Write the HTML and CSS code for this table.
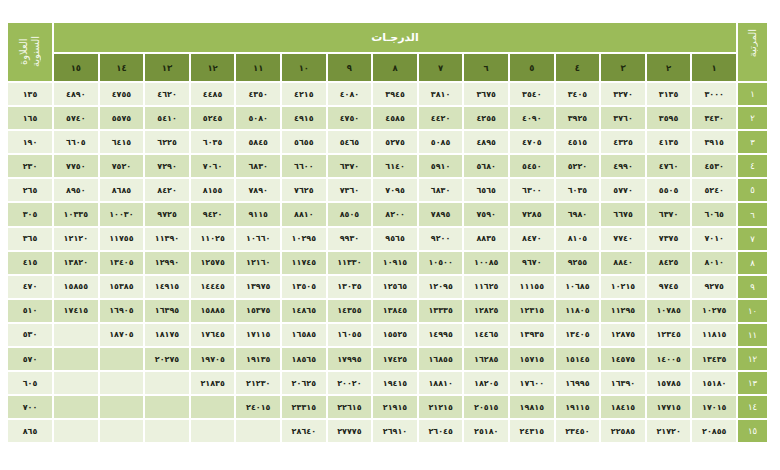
FILE: index.html
```html
<!DOCTYPE html>
<html lang="ar" dir="rtl">
<head>
<meta charset="utf-8">
<title>جدول الرواتب</title>
<link rel="stylesheet" href="styles.css">
</head>
<body>
<div class="sheet">
  <div class="salary">
    <div class="rank-head"><span class="vtext">المرتبة</span></div>
    <div class="grades-head">الدرجـات</div>
    <div class="allow-head"><span class="vtext">العلاوة<br>السنوية</span></div>

    <div class="gnum">١</div><div class="gnum">٢</div><div class="gnum">٣</div><div class="gnum">٤</div><div class="gnum">٥</div><div class="gnum">٦</div><div class="gnum">٧</div><div class="gnum">٨</div><div class="gnum">٩</div><div class="gnum">١٠</div><div class="gnum">١١</div><div class="gnum">١٢</div><div class="gnum">١٣</div><div class="gnum">١٤</div><div class="gnum">١٥</div>

    <div class="row light"><div class="rank">١</div><div class="cell">٣٠٠٠</div><div class="cell">٣١٣٥</div><div class="cell">٣٢٧٠</div><div class="cell">٣٤٠٥</div><div class="cell">٣٥٤٠</div><div class="cell">٣٦٧٥</div><div class="cell">٣٨١٠</div><div class="cell">٣٩٤٥</div><div class="cell">٤٠٨٠</div><div class="cell">٤٢١٥</div><div class="cell">٤٣٥٠</div><div class="cell">٤٤٨٥</div><div class="cell">٤٦٢٠</div><div class="cell">٤٧٥٥</div><div class="cell">٤٨٩٠</div><div class="cell">١٣٥</div></div>
    <div class="row dark"><div class="rank">٢</div><div class="cell">٣٤٣٠</div><div class="cell">٣٥٩٥</div><div class="cell">٣٧٦٠</div><div class="cell">٣٩٢٥</div><div class="cell">٤٠٩٠</div><div class="cell">٤٢٥٥</div><div class="cell">٤٤٢٠</div><div class="cell">٤٥٨٥</div><div class="cell">٤٧٥٠</div><div class="cell">٤٩١٥</div><div class="cell">٥٠٨٠</div><div class="cell">٥٢٤٥</div><div class="cell">٥٤١٠</div><div class="cell">٥٥٧٥</div><div class="cell">٥٧٤٠</div><div class="cell">١٦٥</div></div>
    <div class="row light"><div class="rank">٣</div><div class="cell">٣٩١٥</div><div class="cell">٤١٣٥</div><div class="cell">٤٣٢٥</div><div class="cell">٤٥١٥</div><div class="cell">٤٧٠٥</div><div class="cell">٤٨٩٥</div><div class="cell">٥٠٨٥</div><div class="cell">٥٢٧٥</div><div class="cell">٥٤٦٥</div><div class="cell">٥٦٥٥</div><div class="cell">٥٨٤٥</div><div class="cell">٦٠٣٥</div><div class="cell">٦٢٢٥</div><div class="cell">٦٤١٥</div><div class="cell">٦٦٠٥</div><div class="cell">١٩٠</div></div>
    <div class="row dark"><div class="rank">٤</div><div class="cell">٤٥٣٠</div><div class="cell">٤٧٦٠</div><div class="cell">٤٩٩٠</div><div class="cell">٥٢٢٠</div><div class="cell">٥٤٥٠</div><div class="cell">٥٦٨٠</div><div class="cell">٥٩١٠</div><div class="cell">٦١٤٠</div><div class="cell">٦٣٧٠</div><div class="cell">٦٦٠٠</div><div class="cell">٦٨٣٠</div><div class="cell">٧٠٦٠</div><div class="cell">٧٢٩٠</div><div class="cell">٧٥٢٠</div><div class="cell">٧٧٥٠</div><div class="cell">٢٣٠</div></div>
    <div class="row light"><div class="rank">٥</div><div class="cell">٥٢٤٠</div><div class="cell">٥٥٠٥</div><div class="cell">٥٧٧٠</div><div class="cell">٦٠٣٥</div><div class="cell">٦٣٠٠</div><div class="cell">٦٥٦٥</div><div class="cell">٦٨٣٠</div><div class="cell">٧٠٩٥</div><div class="cell">٧٣٦٠</div><div class="cell">٧٦٢٥</div><div class="cell">٧٨٩٠</div><div class="cell">٨١٥٥</div><div class="cell">٨٤٢٠</div><div class="cell">٨٦٨٥</div><div class="cell">٨٩٥٠</div><div class="cell">٢٦٥</div></div>
    <div class="row dark"><div class="rank">٦</div><div class="cell">٦٠٦٥</div><div class="cell">٦٣٧٠</div><div class="cell">٦٦٧٥</div><div class="cell">٦٩٨٠</div><div class="cell">٧٢٨٥</div><div class="cell">٧٥٩٠</div><div class="cell">٧٨٩٥</div><div class="cell">٨٢٠٠</div><div class="cell">٨٥٠٥</div><div class="cell">٨٨١٠</div><div class="cell">٩١١٥</div><div class="cell">٩٤٢٠</div><div class="cell">٩٧٢٥</div><div class="cell">١٠٠٣٠</div><div class="cell">١٠٣٣٥</div><div class="cell">٣٠٥</div></div>
    <div class="row light"><div class="rank">٧</div><div class="cell">٧٠١٠</div><div class="cell">٧٣٧٥</div><div class="cell">٧٧٤٠</div><div class="cell">٨١٠٥</div><div class="cell">٨٤٧٠</div><div class="cell">٨٨٣٥</div><div class="cell">٩٢٠٠</div><div class="cell">٩٥٦٥</div><div class="cell">٩٩٣٠</div><div class="cell">١٠٢٩٥</div><div class="cell">١٠٦٦٠</div><div class="cell">١١٠٢٥</div><div class="cell">١١٣٩٠</div><div class="cell">١١٧٥٥</div><div class="cell">١٢١٢٠</div><div class="cell">٣٦٥</div></div>
    <div class="row dark"><div class="rank">٨</div><div class="cell">٨٠١٠</div><div class="cell">٨٤٢٥</div><div class="cell">٨٨٤٠</div><div class="cell">٩٢٥٥</div><div class="cell">٩٦٧٠</div><div class="cell">١٠٠٨٥</div><div class="cell">١٠٥٠٠</div><div class="cell">١٠٩١٥</div><div class="cell">١١٣٣٠</div><div class="cell">١١٧٤٥</div><div class="cell">١٢١٦٠</div><div class="cell">١٢٥٧٥</div><div class="cell">١٢٩٩٠</div><div class="cell">١٣٤٠٥</div><div class="cell">١٣٨٢٠</div><div class="cell">٤١٥</div></div>
    <div class="row light"><div class="rank">٩</div><div class="cell">٩٢٧٥</div><div class="cell">٩٧٤٥</div><div class="cell">١٠٢١٥</div><div class="cell">١٠٦٨٥</div><div class="cell">١١١٥٥</div><div class="cell">١١٦٢٥</div><div class="cell">١٢٠٩٥</div><div class="cell">١٢٥٦٥</div><div class="cell">١٣٠٣٥</div><div class="cell">١٣٥٠٥</div><div class="cell">١٣٩٧٥</div><div class="cell">١٤٤٤٥</div><div class="cell">١٤٩١٥</div><div class="cell">١٥٣٨٥</div><div class="cell">١٥٨٥٥</div><div class="cell">٤٧٠</div></div>
    <div class="row dark"><div class="rank">١٠</div><div class="cell">١٠٢٧٥</div><div class="cell">١٠٧٨٥</div><div class="cell">١١٢٩٥</div><div class="cell">١١٨٠٥</div><div class="cell">١٢٣١٥</div><div class="cell">١٢٨٢٥</div><div class="cell">١٣٣٣٥</div><div class="cell">١٣٨٤٥</div><div class="cell">١٤٣٥٥</div><div class="cell">١٤٨٦٥</div><div class="cell">١٥٣٧٥</div><div class="cell">١٥٨٨٥</div><div class="cell">١٦٣٩٥</div><div class="cell">١٦٩٠٥</div><div class="cell">١٧٤١٥</div><div class="cell">٥١٠</div></div>
    <div class="row light"><div class="rank">١١</div><div class="cell">١١٨١٥</div><div class="cell">١٢٣٤٥</div><div class="cell">١٢٨٧٥</div><div class="cell">١٣٤٠٥</div><div class="cell">١٣٩٣٥</div><div class="cell">١٤٤٦٥</div><div class="cell">١٤٩٩٥</div><div class="cell">١٥٥٢٥</div><div class="cell">١٦٠٥٥</div><div class="cell">١٦٥٨٥</div><div class="cell">١٧١١٥</div><div class="cell">١٧٦٤٥</div><div class="cell">١٨١٧٥</div><div class="cell">١٨٧٠٥</div><div class="cell"></div><div class="cell">٥٣٠</div></div>
    <div class="row dark"><div class="rank">١٢</div><div class="cell">١٣٤٣٥</div><div class="cell">١٤٠٠٥</div><div class="cell">١٤٥٧٥</div><div class="cell">١٥١٤٥</div><div class="cell">١٥٧١٥</div><div class="cell">١٦٢٨٥</div><div class="cell">١٦٨٥٥</div><div class="cell">١٧٤٢٥</div><div class="cell">١٧٩٩٥</div><div class="cell">١٨٥٦٥</div><div class="cell">١٩١٣٥</div><div class="cell">١٩٧٠٥</div><div class="cell">٢٠٢٧٥</div><div class="cell"></div><div class="cell"></div><div class="cell">٥٧٠</div></div>
    <div class="row light"><div class="rank">١٣</div><div class="cell">١٥١٨٠</div><div class="cell">١٥٧٨٥</div><div class="cell">١٦٣٩٠</div><div class="cell">١٦٩٩٥</div><div class="cell">١٧٦٠٠</div><div class="cell">١٨٢٠٥</div><div class="cell">١٨٨١٠</div><div class="cell">١٩٤١٥</div><div class="cell">٢٠٠٢٠</div><div class="cell">٢٠٦٢٥</div><div class="cell">٢١٢٣٠</div><div class="cell">٢١٨٣٥</div><div class="cell"></div><div class="cell"></div><div class="cell"></div><div class="cell">٦٠٥</div></div>
    <div class="row dark"><div class="rank">١٤</div><div class="cell">١٧٠١٥</div><div class="cell">١٧٧١٥</div><div class="cell">١٨٤١٥</div><div class="cell">١٩١١٥</div><div class="cell">١٩٨١٥</div><div class="cell">٢٠٥١٥</div><div class="cell">٢١٢١٥</div><div class="cell">٢١٩١٥</div><div class="cell">٢٢٦١٥</div><div class="cell">٢٣٣١٥</div><div class="cell">٢٤٠١٥</div><div class="cell"></div><div class="cell"></div><div class="cell"></div><div class="cell"></div><div class="cell">٧٠٠</div></div>
    <div class="row light"><div class="rank">١٥</div><div class="cell">٢٠٨٥٥</div><div class="cell">٢١٧٢٠</div><div class="cell">٢٢٥٨٥</div><div class="cell">٢٣٤٥٠</div><div class="cell">٢٤٣١٥</div><div class="cell">٢٥١٨٠</div><div class="cell">٢٦٠٤٥</div><div class="cell">٢٦٩١٠</div><div class="cell">٢٧٧٧٥</div><div class="cell">٢٨٦٤٠</div><div class="cell"></div><div class="cell"></div><div class="cell"></div><div class="cell"></div><div class="cell"></div><div class="cell">٨٦٥</div></div>
  </div>
</div>
</body>
</html>
```

FILE: styles.css
```css
html, body {
  margin: 0;
  padding: 0;
  background: #ffffff;
}

body {
  font-family: "DejaVu Sans", "Noto Sans", sans-serif;
}

.sheet {
  padding: 23px 13px 0 8px;
}

.salary {
  direction: rtl;
  display: grid;
  width: 759px;
  grid-template-columns: 29px repeat(15, 1fr) 44px;
  grid-template-rows: 29px 27px repeat(15, 22.1px);
  column-gap: 2px;
  row-gap: 2px;
}

.rank-head,
.allow-head {
  grid-row: 1 / 3;
  background: #9bbb59;
  color: #ffffff;
  display: flex;
  align-items: flex-start;
  justify-content: center;
  padding-top: 6px;
}

.rank-head {
  grid-column: 1;
}

.allow-head {
  grid-column: 17;
  align-items: center;
  padding-top: 0;
}

.vtext {
  writing-mode: vertical-rl;
  transform: rotate(180deg);
  font-size: 10px;
  font-weight: normal;
  line-height: 12px;
  text-align: center;
  color: #f4f8ea;
}

.grades-head {
  grid-column: 2 / 17;
  grid-row: 1;
  background: #9bbb59;
  color: #ffffff;
  font-size: 11px;
  font-weight: bold;
  display: flex;
  align-items: center;
  justify-content: center;
}

.gnum {
  background: #76923c;
  color: #1e2a0e;
  font-size: 8.5px;
  font-weight: bold;
  display: flex;
  align-items: center;
  justify-content: center;
}

.row {
  display: contents;
}

.cell,
.rank {
  display: flex;
  align-items: center;
  justify-content: center;
  font-size: 8px;
  font-weight: bold;
  color: #22261a;
}

.row.light .cell {
  background: #ebf1de;
}

.row.dark .cell {
  background: #d6e3bc;
}

.rank {
  background: #9bbb59;
  color: #ffffff;
  font-size: 8.5px;
  font-weight: normal;
}
```
